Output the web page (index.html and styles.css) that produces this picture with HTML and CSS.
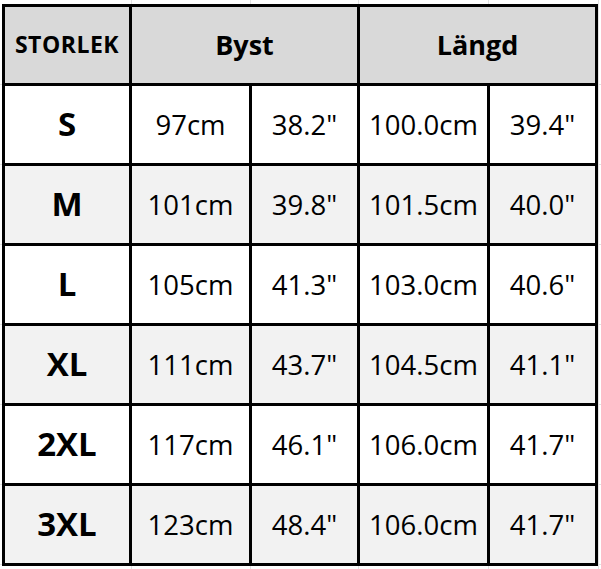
FILE: index.html
```html
<!DOCTYPE html>
<html lang="sv">
<head>
<meta charset="utf-8">
<title>Storlekstabell</title>
<link rel="stylesheet" href="styles.css">
</head>
<body>
<div class="size-table">
  <div class="cell head label-head">STORLEK</div>
  <div class="cell head span2">Byst</div>
  <div class="cell head span2">Längd</div>

  <div class="cell size">S</div>
  <div class="cell">97cm</div>
  <div class="cell">38.2"</div>
  <div class="cell">100.0cm</div>
  <div class="cell">39.4"</div>

  <div class="cell size alt">M</div>
  <div class="cell alt">101cm</div>
  <div class="cell alt">39.8"</div>
  <div class="cell alt">101.5cm</div>
  <div class="cell alt">40.0"</div>

  <div class="cell size">L</div>
  <div class="cell">105cm</div>
  <div class="cell">41.3"</div>
  <div class="cell">103.0cm</div>
  <div class="cell">40.6"</div>

  <div class="cell size alt">XL</div>
  <div class="cell alt">111cm</div>
  <div class="cell alt">43.7"</div>
  <div class="cell alt">104.5cm</div>
  <div class="cell alt">41.1"</div>

  <div class="cell size">2XL</div>
  <div class="cell">117cm</div>
  <div class="cell">46.1"</div>
  <div class="cell">106.0cm</div>
  <div class="cell">41.7"</div>

  <div class="cell size alt">3XL</div>
  <div class="cell alt">123cm</div>
  <div class="cell alt">48.4"</div>
  <div class="cell alt">106.0cm</div>
  <div class="cell alt">41.7"</div>
</div>
</body>
</html>
```
FILE: styles.css
```css
html, body {
  margin: 0;
  height: 100%;
}
body {
  background-color: #ffffff;
  background-image:
    linear-gradient(#e2e2e2, #e2e2e2),
    linear-gradient(#e2e2e2, #e2e2e2),
    linear-gradient(#e2e2e2, #e2e2e2),
    linear-gradient(#e2e2e2, #e2e2e2),
    linear-gradient(#e2e2e2, #e2e2e2),
    repeating-linear-gradient(to bottom, transparent 0, transparent 79px, #e2e2e2 79px, #e2e2e2 80px);
  background-size: 1px 100%, 1px 100%, 1px 100%, 1px 100%, 1px 100%, 100% 100%;
  background-position: 131px 0, 250px 0, 358px 0, 488px 0, 598px 0, 0 5px;
  background-repeat: no-repeat, no-repeat, no-repeat, no-repeat, no-repeat, repeat;
  font-family: "Open Sans", "Liberation Sans", sans-serif;
  color: #000;
}
.size-table {
  display: grid;
  grid-template-columns: 124px 117px 105px 127px 105px;
  grid-template-rows: 76px repeat(6, 77px);
  gap: 3px;
  padding: 3px;
  background: #000;
  width: max-content;
  margin: 4px 0 0 2px;
}
.cell {
  background: #ffffff;
  display: flex;
  align-items: center;
  justify-content: center;
  font-size: 27.5px;
  line-height: 1;
}
.cell.alt {
  background: #f2f2f2;
}
.head {
  background: #d9d9d9;
  font-weight: 700;
  font-size: 27px;
  padding-bottom: 2px;
}
.label-head {
  font-size: 23px;
  letter-spacing: 0.5px;
}
.span2 {
  grid-column: span 2;
}
.size {
  font-weight: 700;
  font-size: 33px;
  padding-bottom: 2px;
}
```
